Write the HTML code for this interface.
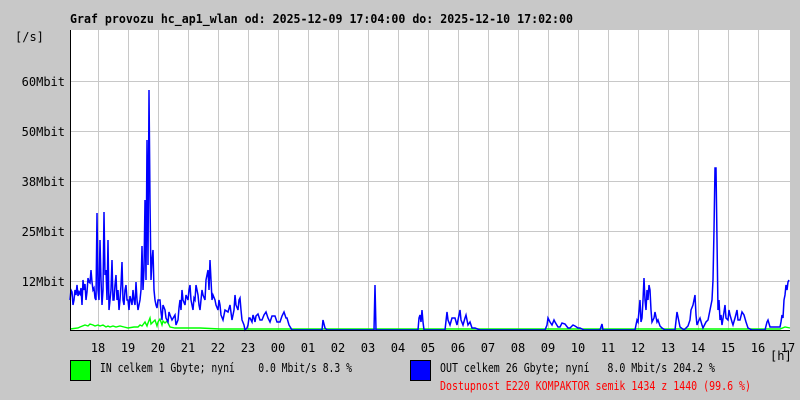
<!DOCTYPE html>
<html><head><meta charset="utf-8"><style>
html,body{margin:0;padding:0;background:#c8c8c8;}
svg{display:block;}
text{font-family:"DejaVu Sans Mono","Liberation Mono",monospace;font-size:12px;fill:#000;white-space:pre;}
</style></head><body>
<svg width="800" height="400" xmlns="http://www.w3.org/2000/svg" xml:space="preserve">
<rect width="800" height="400" fill="#c8c8c8"/>
<text x="70" y="23" font-weight="bold" textLength="503" lengthAdjust="spacingAndGlyphs">Graf provozu hc_ap1_wlan od: 2025-12-09 17:04:00 do: 2025-12-10 17:02:00</text>
<rect x="70" y="30" width="720" height="300" fill="#fff"/>
<g stroke="#c8c8c8" stroke-width="1">
<path d="M70 81.5H790M70 131.5H790M70 181.5H790M70 231.5H790M70 281.5H790"/>
<path d="M98.5 30V330M128.5 30V330M158.5 30V330M188.5 30V330M218.5 30V330M248.5 30V330M278.5 30V330M308.5 30V330M338.5 30V330M368.5 30V330M398.5 30V330M428.5 30V330M458.5 30V330M488.5 30V330M518.5 30V330M548.5 30V330M578.5 30V330M608.5 30V330M638.5 30V330M668.5 30V330M698.5 30V330M728.5 30V330M758.5 30V330"/>
</g>
<polyline fill="none" stroke="#00ff00" stroke-width="1.4" points="70,329 78,328 80,327 85,325 88,326 90,324 93,325 95,326 98,325 100,326 103,325 106,327 108,326 110,327 113,326 116,327 120,326 124,327 128,328 134,327 138,327 140,325 142,326 145,322 147,326 148,323 150,318 151,324 153,322 155,320 157,326 158,322 160,319 162,325 163,321 165,323 167,321 170,327 175,328 200,328 220,329 260,329 300,329 400,329 500,329 600,329 700,329 780,329 785,327 790,328"/>
<polyline fill="none" stroke="#0000ff" stroke-width="1.5" stroke-linejoin="miter" points="70,300 71,290 72,292 73,305 74,300 75,290 76,295 77,285 78,296 79,292 80,294 81,288 82,305 83,280 84,290 85,284 86,300 87,292 88,278 89,282 90,283 91,270 92,282 93,290 94,288 95,298 96,300 97,213 98,290 99,300 100,240 101,280 102,305 103,290 104,212 105,275 106,270 107,300 108,240 109,310 110,300 111,290 112,260 113,300 114,300 115,285 116,275 117,300 118,290 119,310 120,300 121,285 122,262 123,300 124,305 125,290 126,285 127,300 128,300 129,310 130,296 131,300 132,305 133,290 134,300 135,305 136,282 137,300 138,310 139,305 140,300 141,290 142,246 143,290 144,270 145,200 146,280 147,140 148,265 149,90 150,200 151,280 152,260 153,250 154,290 155,300 156,305 157,308 158,300 160,300 161,312 162,320 163,305 165,310 166,318 168,322 169,312 170,315 172,320 175,315 176,325 178,320 179,308 180,300 181,310 182,290 183,300 185,305 186,295 188,300 189,290 190,285 191,300 193,310 194,298 195,300 196,285 198,295 199,305 200,310 201,300 202,290 203,295 205,300 206,280 208,270 209,290 210,260 211,280 212,300 213,295 215,300 216,305 218,310 219,300 220,305 221,315 223,320 225,310 228,312 230,305 232,320 234,310 235,295 236,305 238,310 239,300 240,298 241,310 242,320 244,325 245,330 247,328 248,325 249,318 250,318 252,322 253,315 254,318 255,322 256,316 258,314 260,320 262,320 264,315 266,312 268,318 270,322 272,316 275,316 277,322 280,322 282,316 284,312 286,318 287,318 289,325 292,330 322,330 323,320 325,328 327,330 374,330 375,285 376,330 418,330 419,318 420,315 421,322 422,310 423,322 424,330 445,330 447,312 448,320 450,325 452,318 455,318 457,325 460,310 461,320 463,325 465,318 466,315 468,325 470,322 472,328 475,328 480,330 545,330 547,325 548,318 550,322 552,325 554,320 555,322 558,327 560,327 562,323 565,324 568,328 570,328 573,325 575,326 578,328 580,328 584,330 600,330 602,324 603,330 635,330 637,320 638,322 640,300 641,322 642,318 643,300 644,278 645,300 646,310 647,290 648,300 649,285 650,290 651,310 652,322 654,318 655,312 657,322 658,320 660,326 662,328 665,330 675,330 677,312 679,322 680,327 684,330 688,326 690,320 691,310 693,305 694,300 695,295 696,315 697,325 699,320 700,318 702,325 703,328 706,322 708,320 710,310 712,300 713,280 714,230 715,168 716,168 717,240 718,310 719,300 720,320 721,315 722,325 724,312 725,305 726,318 728,320 729,310 730,315 732,322 733,325 735,318 737,310 738,320 740,320 742,312 744,315 746,322 748,328 752,330 765,330 767,322 768,320 770,327 780,327 781,322 782,315 783,318 784,300 785,295 786,285 787,290 788,282 789,280"/>
<path d="M70.5 30V330.5H790" stroke="#000" stroke-width="1" fill="none"/>
<text x="15" y="41">[/s]</text>
<g text-anchor="end">
<text x="65" y="86">60Mbit</text>
<text x="65" y="136">50Mbit</text>
<text x="65" y="186">38Mbit</text>
<text x="65" y="236">25Mbit</text>
<text x="65" y="286">12Mbit</text>
</g>
<g text-anchor="middle">
<text x="98" y="352">18</text><text x="128" y="352">19</text><text x="158" y="352">20</text><text x="188" y="352">21</text><text x="218" y="352">22</text><text x="248" y="352">23</text><text x="278" y="352">00</text><text x="308" y="352">01</text><text x="338" y="352">02</text><text x="368" y="352">03</text><text x="398" y="352">04</text><text x="428" y="352">05</text><text x="458" y="352">06</text><text x="488" y="352">07</text><text x="518" y="352">08</text><text x="548" y="352">09</text><text x="578" y="352">10</text><text x="608" y="352">11</text><text x="638" y="352">12</text><text x="668" y="352">13</text><text x="698" y="352">14</text><text x="728" y="352">15</text><text x="758" y="352">16</text><text x="788" y="352">17</text>
</g>
<text x="770" y="360">[h]</text>
<rect x="70.5" y="360.5" width="20" height="20" fill="#00ff00" stroke="#000"/>
<text x="100" y="372" textLength="252" lengthAdjust="spacingAndGlyphs">IN celkem 1 Gbyte; nyní    0.0 Mbit/s 8.3 %</text>
<rect x="410.5" y="360.5" width="20" height="20" fill="#0000ff" stroke="#000"/>
<text x="440" y="372" textLength="275" lengthAdjust="spacingAndGlyphs">OUT celkem 26 Gbyte; nyní   8.0 Mbit/s 204.2 %</text>
<text x="440" y="390" style="fill:#ff0000" textLength="311" lengthAdjust="spacingAndGlyphs">Dostupnost E220 KOMPAKTOR semik 1434 z 1440 (99.6 %)</text>
</svg>
</body></html>
